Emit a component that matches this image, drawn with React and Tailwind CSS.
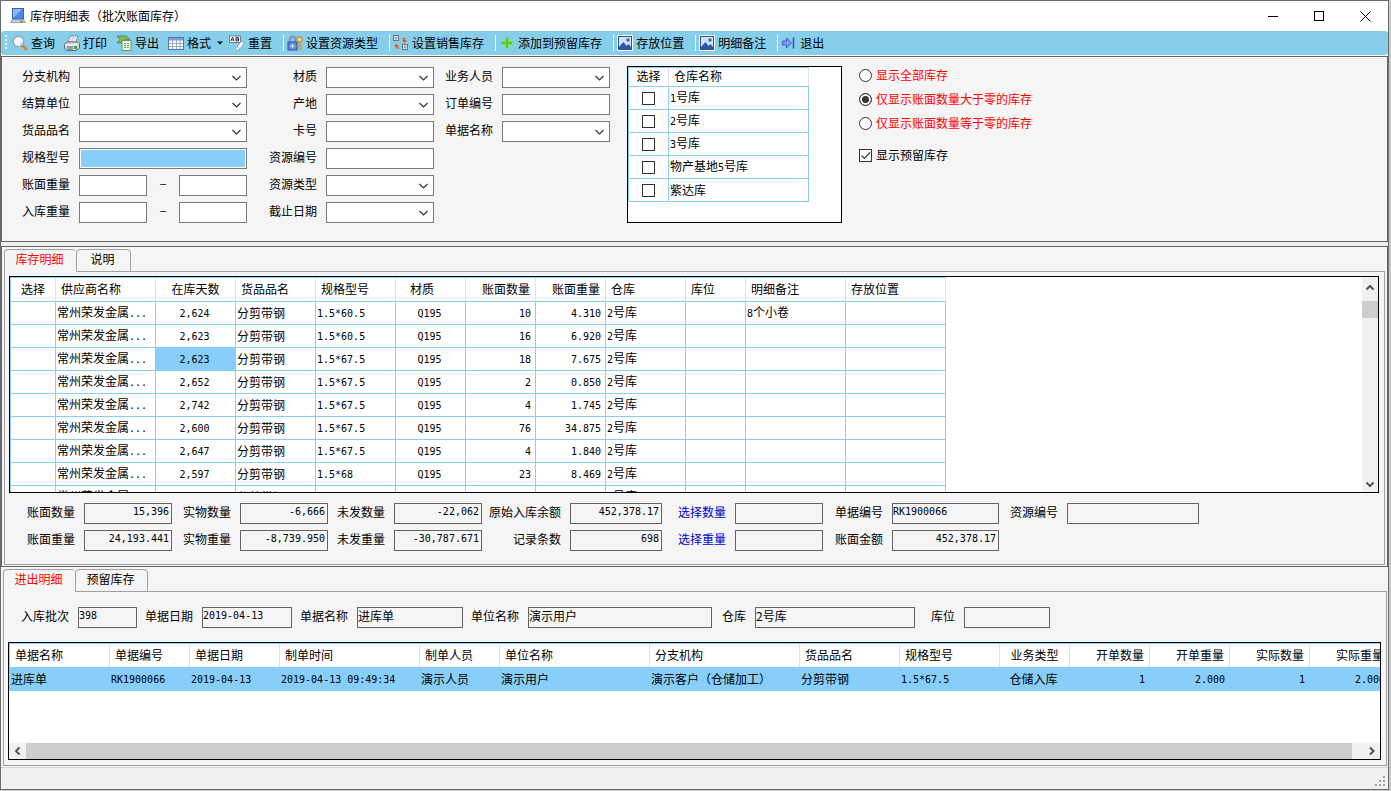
import React, { useState } from 'react'
import clsx from 'clsx'

const MONO = 'font-["DejaVu_Sans_Mono",monospace] text-[10px]'

/* ---------- icons ---------- */

const Icon = ({ children }) => (
  <svg viewBox="0 0 16 16" className="size-4 shrink-0" aria-hidden="true">{children}</svg>
)

const AppIcon = () => (
  <Icon>
    <rect x="2.500" y=".5" width="11" height="10.500" fill="#4f86e8" stroke="#3a62b4" />
    <path d="M3 1h9L3 10z" fill="#8fb8fa" />
    <path d="M2 12h12l1.500 2.500H.5z" fill="#d9dfe6" stroke="#7d8b9b" strokeWidth=".8" />
    <path d="M10 13.500h3" stroke="#3fa34a" />
  </Icon>
)

const SearchIcon = () => (
  <Icon>
    <path d="M10.500 10.500l3.500 3.500" stroke="#c98a2b" strokeWidth="3" strokeLinecap="round" />
    <circle cx="6.500" cy="6.500" r="5.300" fill="#f2f8ff" stroke="#97a3bb" strokeWidth="1.400" />
    <path d="M8 10a4 4 0 0 0 2-3" stroke="#b9d3f2" strokeWidth="1.500" fill="none" />
  </Icon>
)

const PrinterIcon = () => (
  <Icon>
    <path d="M6.500 1H14l-2.500 6H4z" fill="#fff" stroke="#77808c" strokeWidth=".8" />
    <path d="M7.500 3h4M6.500 5h4" stroke="#8aa0c8" strokeWidth=".8" />
    <path d="M3 7h10l2.500 1v5L12 15.500H2L.5 13V9.500z" fill="#d3d8df" stroke="#59616c" strokeWidth=".9" />
    <path d="M1 10h10.500L15 8" stroke="#fff" fill="none" />
    <path d="M3 12h6M3 14h6" stroke="#59616c" />
    <rect x="10" y="11" width="3" height="3" fill="#2fb344" />
  </Icon>
)

const ExportIcon = () => (
  <Icon>
    <path d="M1 1h9.500l3 3.500H9L7.500 8H1l3-3.500z" fill="#7cb85c" stroke="#4b8a3a" strokeWidth=".8" />
    <rect x="6" y="5.500" width="9" height="10" fill="#f2f7ec" stroke="#6b8f5c" strokeWidth=".9" />
    <path d="M8 8.500h5M8 10.500h5M8 12.500h5" stroke="#6a9a58" strokeDasharray="2 1" />
  </Icon>
)

const GridIcon = () => (
  <Icon>
    <rect x=".5" y="2.500" width="15" height="12" fill="#fff" stroke="#5575ad" />
    <rect x="1" y="3" width="14" height="2.500" fill="#7c9fd6" />
    <path d="M1 8.500h14M1 11.500h14M4.500 3v11M8.500 3v11M12 3v11" stroke="#7f97c0" strokeWidth=".8" />
  </Icon>
)

const ResetIcon = () => (
  <Icon>
    <rect x=".5" y="1" width="11" height="6.500" fill="#fff" stroke="#5b6780" strokeWidth=".8" />
    <path d="M1.800 6.200l1.700-4 1.700 4M2.500 5h2M7 2.500h2.500v3.500H7zM7 4.200h2.500" stroke="#222" strokeWidth=".9" fill="none" />
    <path d="M8 11.500L12.500 6l2.500 1.500-.5 2L10 15H7.500L6 13z" fill="#f4f6fa" stroke="#8c97a8" strokeWidth=".9" />
    <path d="M8 11.500l2.500 2" stroke="#8c97a8" strokeWidth=".8" />
  </Icon>
)

const LockIcon = () => (
  <Icon>
    <path d="M3 7V4a2.500 2.500 0 0 1 5 0v3" fill="none" stroke="#7088b8" strokeWidth="1.500" />
    <rect x="1" y="7" width="9" height="8" fill="#5b8be0" stroke="#2d55a8" />
    <path d="M5.500 8.500v5M3 11h5" stroke="#dce9ff" />
    <circle cx="12.500" cy="4.500" r="2.500" fill="#fbe19b" stroke="#c98f2a" strokeWidth="1.400" />
    <path d="M12.500 7v8M12.500 10.500h2M12.500 13.500h2" stroke="#d99a25" strokeWidth="1.800" />
  </Icon>
)

const SwapIcon = () => (
  <Icon>
    <g fill="#fff" stroke="#6b7488">
      <rect x=".5" y=".5" width="5" height="5" />
      <rect x="9.500" y="9.500" width="5" height="5" />
    </g>
    <path d="M3 1v4M1 3h4M12 10v4M10 12h4" stroke="#6b7488" strokeWidth=".8" />
    <path d="M9 3.500h2.500v3M9.800 5l1.700 2 1.700-2" stroke="#e2572b" strokeWidth="1.200" fill="none" />
    <path d="M6.500 13H3.500v-3M1.800 11.500l1.700-2 1.700 2" stroke="#e2572b" strokeWidth="1.200" fill="none" />
  </Icon>
)

const PlusIcon = () => (
  <Icon>
    <path d="M6.500 2.500h3v4h4v3h-4v4h-3v-4h-4v-3h4z" fill="#4fcf1c" stroke="#8fe070" strokeWidth=".8" />
  </Icon>
)

const ImageIcon = () => (
  <Icon>
    <rect width="16" height="16" fill="#fff" />
    <rect x="1.500" y="1.500" width="13" height="13" fill="#cfe2fa" stroke="#2f5597" />
    <path d="M2 12l4.500-5 3 4 2-2 2.500 3v2H2z" fill="#2f56a6" />
    <circle cx="11" cy="5" r="1.700" fill="#3a66b5" />
  </Icon>
)

const ExitIcon = () => (
  <Icon>
    <path d="M1.500 6h4V3l5 5-5 5v-3h-4z" fill="#7f9cf0" stroke="#3350c4" strokeWidth=".9" />
    <path d="M12.500 2.500v11" stroke="#3350c4" strokeWidth="1.600" />
  </Icon>
)

const Chevron = () => (
  <svg viewBox="0 0 9 6" className="pointer-events-none col-start-1 row-start-1 mr-[6px] h-[6px] w-[9px] self-center justify-self-end">
    <path d="M.5 1l4 4 4-4" fill="none" stroke="#333" strokeWidth="1.200" />
  </svg>
)

const ScrollArrow = ({ d }) => (
  <svg viewBox="0 0 16 16" className="size-4"><path d={d} fill="none" stroke="#555" strokeWidth="2" /></svg>
)

/* ---------- small pieces ---------- */

// latin runs are set in the narrow monospace face
const Mixed = ({ text }) =>
  text.split(/([\x20-\x7e]+)/).filter(Boolean).map((part, i) =>
    /^[\x20-\x7e]/.test(part) ? <span key={i} className={MONO}>{part}</span> : part
  )

const ToolButton = ({ icon, text, children }) => (
  <button type="button" className="flex h-6 shrink-0 items-center gap-[3px] pr-[9px]">
    {icon}
    <span>{text}</span>
    {children}
  </button>
)

const ToolSep = () => <span className="mr-[3px] ml-[2px] h-4 w-px shrink-0 bg-white" />

const FieldLabel = ({ id, children }) => (
  <label htmlFor={id} className="col-span-1 self-center pr-[9px] pb-[4px] text-right whitespace-nowrap">{children}</label>
)

const TextBox = ({ id, label, highlight }) => (
  <input
    id={id}
    aria-label={label}
    type="text"
    className={clsx(
      'h-[21px] w-full min-w-0 border border-[#7a7a7a] px-[2px] outline-none',
      highlight ? 'bg-[#87cefa] shadow-[inset_0_0_0_1px_#fff]' : 'bg-white'
    )}
  />
)

const SelectBox = ({ id }) => (
  <div className="grid">
    <select id={id} className="col-start-1 row-start-1 h-[21px] w-full appearance-none border border-[#7a7a7a] bg-white px-[2px] outline-none">
      <option></option>
    </select>
    <Chevron />
  </div>
)

const RangeBox = ({ id, label }) => (
  <div className="grid grid-cols-[68px_32px_68px] items-center">
    <TextBox id={id} />
    <span className={clsx('pb-[4px] text-center', MONO)}>–</span>
    <TextBox label={label + '上限'} />
  </div>
)

const ReadOnlyField = ({ id, label, value = '', right, blue }) => (
  <>
    <label htmlFor={id} className={clsx('self-center pr-[9px] pb-[4px] text-right whitespace-nowrap', blue && 'text-[#0000c8]')}>{label}</label>
    <input
      id={id}
      readOnly
      value={value}
      className={clsx(
        'h-[21px] w-full min-w-0 border border-[#646464] bg-[#f5f5f5] pr-[2px] pb-[4px] outline-none',
        right && 'text-right',
        /^[\x20-\x7e]+$/.test(value) && MONO
      )}
    />
  </>
)

const Tabs = ({ items, active, onChange }) => (
  <div className="flex h-[23px]" role="tablist">
    {items.map(([name, width], i) => (
      <button
        key={name}
        type="button"
        role="tab"
        aria-selected={i === active}
        onClick={() => onChange(i)}
        className={clsx(
          'rounded-t-[4px] border-t border-[#a0a0a0] pr-[2px]',
          width,
          i === 0 ? 'border-l' : 'border-x',
          i === active ? 'pb-[4px] text-[#ff0000]' : 'border-b pb-[3px]'
        )}
      >
        {name}
      </button>
    ))}
    <div className="flex-1 border-b border-[#a0a0a0]" />
  </div>
)

/* ---------- data ---------- */

const warehouses = ['1号库', '2号库', '3号库', '物产基地5号库', '紫达库']

const stockColumns = [
  { title: '选择', w: 'w-[45px]', align: 'center' },
  { title: '供应商名称', w: 'w-[100px]' },
  { title: '在库天数', w: 'w-[80px]', align: 'center' },
  { title: '货品品名', w: 'w-[80px]' },
  { title: '规格型号', w: 'w-[80px]' },
  { title: '材质', w: 'w-[70px]', align: 'center', sort: true },
  { title: '账面数量', w: 'w-[70px]', align: 'right' },
  { title: '账面重量', w: 'w-[70px]', align: 'right' },
  { title: '仓库', w: 'w-[80px]' },
  { title: '库位', w: 'w-[60px]' },
  { title: '明细备注', w: 'w-[100px]' },
  { title: '存放位置', w: 'w-[100px]' },
]

const stockRows = [
  ['2,624', '1.5*60.5', '10', '4.310', '8个小卷'],
  ['2,623', '1.5*60.5', '16', '6.920', ''],
  ['2,623', '1.5*67.5', '18', '7.675', ''],
  ['2,652', '1.5*67.5', '2', '0.850', ''],
  ['2,742', '1.5*67.5', '4', '1.745', ''],
  ['2,600', '1.5*67.5', '76', '34.875', ''],
  ['2,647', '1.5*67.5', '4', '1.840', ''],
  ['2,597', '1.5*68', '23', '8.469', ''],
  ['', '', '', '', ''],
].map(([days, spec, qty, weight, note]) =>
  ['', '常州荣发金属...', days, '分剪带钢', spec, days && 'Q195', qty, weight, '2号库', '', note, '']
)

const billColumns = [
  { title: '单据名称', w: 'w-[100px]', value: '进库单' },
  { title: '单据编号', w: 'w-[80px]', value: 'RK1900066' },
  { title: '单据日期', w: 'w-[90px]', value: '2019-04-13' },
  { title: '制单时间', w: 'w-[140px]', value: '2019-04-13 09:49:34' },
  { title: '制单人员', w: 'w-[80px]', value: '演示人员' },
  { title: '单位名称', w: 'w-[150px]', value: '演示用户' },
  { title: '分支机构', w: 'w-[150px]', value: '演示客户（仓储加工）' },
  { title: '货品品名', w: 'w-[100px]', value: '分剪带钢' },
  { title: '规格型号', w: 'w-[100px]', value: '1.5*67.5' },
  { title: '业务类型', w: 'w-[70px]', align: 'center', value: '仓储入库' },
  { title: '开单数量', w: 'w-[80px]', align: 'right', value: '1' },
  { title: '开单重量', w: 'w-[80px]', align: 'right', value: '2.000' },
  { title: '实际数量', w: 'w-[80px]', align: 'right', value: '1' },
  { title: '实际重量', w: 'w-[80px]', align: 'right', value: '2.000' },
]

const headAlign = (c) =>
  c.align === 'center' ? 'px-0 text-center' : c.align === 'right' ? 'pr-[5px] pl-0 text-right' : 'pr-0 pl-[5px] text-left'

const cellAlign = (c) =>
  c.align === 'center' ? 'pr-[2px] pl-0 text-center' : c.align === 'right' ? 'pr-[4px] pl-0 text-right' : 'pr-0 pl-px text-left'

/* ---------- sections ---------- */

const TitleBar = () => (
  <header className="flex h-[30px] items-center bg-white pl-[9px]">
    <AppIcon />
    <h1 className="ml-1 flex-1">库存明细表（批次账面库存）</h1>
    <div className="flex">
      <button type="button" aria-label="最小化" className="flex h-[30px] w-[46px] items-center justify-center">
        <svg viewBox="0 0 11 11" className="size-[11px]" shapeRendering="crispEdges"><path d="M0 5.500h10" stroke="#000" /></svg>
      </button>
      <button type="button" aria-label="最大化" className="flex h-[30px] w-[46px] items-center justify-center">
        <svg viewBox="0 0 11 11" className="size-[11px]" shapeRendering="crispEdges"><rect x=".5" y=".5" width="9" height="9" fill="none" stroke="#000" /></svg>
      </button>
      <button type="button" aria-label="关闭" className="flex h-[30px] w-[46px] items-center justify-center">
        <svg viewBox="0 0 11 11" className="size-[11px]"><path d="M.5.5l10 10M10.500.5l-10 10" stroke="#000" /></svg>
      </button>
    </div>
  </header>
)

const Toolbar = () => (
  <div className="bg-white pb-px">
    <div className="flex h-6 items-center rounded-[3px] bg-[#87ceeb] pl-[4px]">
      <svg viewBox="0 0 3 16" className="mr-[4px] h-4 w-[3px] shrink-0">
        <path d="M0 1h2M0 5h2M0 9h2M0 13h2" stroke="#f5fbff" strokeWidth="2" />
      </svg>
      <ToolButton icon={<SearchIcon />} text="查询" />
      <ToolButton icon={<PrinterIcon />} text="打印" />
      <ToolButton icon={<ExportIcon />} text="导出" />
      <ToolButton icon={<GridIcon />} text="格式">
        <svg viewBox="0 0 6 4" className="h-[4px] w-[6px] overflow-visible"><path d="M3 .5h6L6 3.500z" fill="#000" /></svg>
      </ToolButton>
      <ToolButton icon={<ResetIcon />} text="重置" />
      <ToolSep />
      <ToolButton icon={<LockIcon />} text="设置资源类型" />
      <ToolSep />
      <ToolButton icon={<SwapIcon />} text="设置销售库存" />
      <ToolSep />
      <ToolButton icon={<PlusIcon />} text="添加到预留库存" />
      <ToolSep />
      <ToolButton icon={<ImageIcon />} text="存放位置" />
      <ToolSep />
      <ToolButton icon={<ImageIcon />} text="明细备注" />
      <ToolSep />
      <ToolButton icon={<ExitIcon />} text="退出" />
    </div>
  </div>
)

const WarehouseList = () => (
  <div className="ml-[17px] h-[157px] w-[215px] border border-black bg-white">
    <table className="w-[181px] table-fixed border-separate border-spacing-0 border-t border-l border-[#87cefa]">
      <thead>
        <tr className="h-[19px]">
          <th className="w-[40px] border-r border-b border-r-[#e0e0e0] border-b-[#87cefa] p-0 pb-[2px] text-center font-normal">选择</th>
          <th className="w-[140px] border-r border-b border-r-[#e0e0e0] border-b-[#87cefa] p-0 pb-[2px] pl-[5px] text-left font-normal">仓库名称</th>
        </tr>
      </thead>
      <tbody>
        {warehouses.map((name) => (
          <tr key={name} className="h-[23px]">
            <td className="border-r border-b border-[#87cefa] p-0">
              <input type="checkbox" aria-label={name} className="mx-auto block size-[13px] appearance-none border border-[#333] bg-white checked:bg-[#333]" />
            </td>
            <td className="border-r border-b border-[#87cefa] p-0 pl-px"><Mixed text={name} /></td>
          </tr>
        ))}
      </tbody>
    </table>
  </div>
)

const DisplayOptions = () => {
  const [mode, setMode] = useState(1)
  const [reserved, setReserved] = useState(true)

  return (
    <div className="ml-[17px]">
      {['显示全部库存', '仅显示账面数量大于零的库存', '仅显示账面数量等于零的库存'].map((text, i) => (
        <label key={text} className="flex h-6 items-center gap-[4px] pb-[6px] text-[#ff0000]">
          <input
            type="radio"
            name="stock-mode"
            checked={mode === i}
            onChange={() => setMode(i)}
            className="size-[13px] appearance-none rounded-full border border-[#333] bg-white checked:bg-[#333] checked:shadow-[inset_0_0_0_2px_#fff]"
          />
          {text}
        </label>
      ))}
      <label className="mt-2 flex h-6 items-center gap-[4px] pb-[6px]">
        <span className="grid">
          <input
            type="checkbox"
            checked={reserved}
            onChange={() => setReserved(!reserved)}
            className="peer col-start-1 row-start-1 size-[13px] appearance-none border border-[#333] bg-white"
          />
          <svg viewBox="0 0 13 13" className="pointer-events-none invisible col-start-1 row-start-1 size-[13px] peer-checked:visible">
            <path d="M2.500 6.500l3 3 5.500-6" fill="none" stroke="#333" strokeWidth="1.200" />
          </svg>
        </span>
        显示预留库存
      </label>
    </div>
  )
}

const FilterPanel = () => (
  <section className="flex items-start border border-[#646464] bg-[#f5f5f5] pt-[9px] pb-[18px]">
    <div className="mt-px grid shrink-0 grid-cols-[77px_168px_79px_108px_68px_108px] gap-y-[6px]">
      <FieldLabel id="branch">分支机构</FieldLabel>
      <SelectBox id="branch" />
      <FieldLabel id="material">材质</FieldLabel>
      <SelectBox id="material" />
      <FieldLabel id="clerk">业务人员</FieldLabel>
      <SelectBox id="clerk" />

      <FieldLabel id="unit">结算单位</FieldLabel>
      <SelectBox id="unit" />
      <FieldLabel id="origin">产地</FieldLabel>
      <SelectBox id="origin" />
      <FieldLabel id="order">订单编号</FieldLabel>
      <TextBox id="order" />

      <FieldLabel id="goods">货品品名</FieldLabel>
      <SelectBox id="goods" />
      <FieldLabel id="card">卡号</FieldLabel>
      <TextBox id="card" />
      <FieldLabel id="bill">单据名称</FieldLabel>
      <SelectBox id="bill" />

      <FieldLabel id="spec">规格型号</FieldLabel>
      <TextBox id="spec" highlight />
      <FieldLabel id="resource">资源编号</FieldLabel>
      <TextBox id="resource" />
      <div className="col-span-2" />

      <FieldLabel id="book-weight">账面重量</FieldLabel>
      <RangeBox id="book-weight" label="账面重量" />
      <FieldLabel id="resource-type">资源类型</FieldLabel>
      <SelectBox id="resource-type" />
      <div className="col-span-2" />

      <FieldLabel id="in-weight">入库重量</FieldLabel>
      <RangeBox id="in-weight" label="入库重量" />
      <FieldLabel id="end-date">截止日期</FieldLabel>
      <SelectBox id="end-date" />
    </div>
    <WarehouseList />
    <DisplayOptions />
  </section>
)

const StockTable = () => (
  <div className="flex h-[217px] overflow-hidden border border-black bg-white">
    <div className="min-w-0 flex-1 overflow-hidden">
      <table className="w-[936px] table-fixed border-separate border-spacing-0 border-t border-l border-[#87cefa]">
        <thead>
          <tr className="h-[24px]">
            {stockColumns.map((c) => (
              <th
                key={c.title}
                className={clsx(
                  'border-r border-b border-r-[#e0e0e0] border-b-[#87cefa] pt-0 pb-[2px] font-normal',
                  c.w,
                  c.sort ? 'pr-[17px] text-center' : headAlign(c)
                )}
              >
                {c.title}
              </th>
            ))}
          </tr>
        </thead>
        <tbody>
          {stockRows.map((row, r) => (
            <tr key={r} className="h-[23px]">
              {row.map((text, i) => (
                <td
                  key={i}
                  className={clsx(
                    'overflow-hidden border-r border-b border-[#87cefa] py-0 leading-[14px] whitespace-nowrap',
                    cellAlign(stockColumns[i]),
                    r === 2 && i === 2 && 'bg-[#87cefa]'
                  )}
                >
                  <Mixed text={text} />
                </td>
              ))}
            </tr>
          ))}
        </tbody>
      </table>
    </div>
    <div className="flex w-4 flex-col bg-[#f0f0f0]">
      <button type="button" aria-label="向上滚动" className="h-[24px] w-4">
        <ScrollArrow d="M4.500 8.500L8 5l3.500 3.500" />
      </button>
      <div className="h-[17px] bg-[#cdcdcd]" />
      <div className="flex-1" />
      <button type="button" aria-label="向下滚动" className="h-4 w-4">
        <ScrollArrow d="M4.500 6.500L8 10l3.500-3.500" />
      </button>
    </div>
  </div>
)

const StockPanel = () => {
  const [tab, setTab] = useState(0)

  return (
    <section className="mt-[4px] border border-[#646464] bg-[#f5f5f5] px-[2px] pt-[2px] pb-px">
      <Tabs items={[['库存明细', 'w-[72px]'], ['说明', 'w-[55px]']]} active={tab} onChange={setTab} />
      <div className="border-x border-b border-[#a0a0a0] pt-[4px] pr-[5px] pb-[13px] pl-[4px]">
        <StockTable />
        <div className="mt-[10px] grid grid-cols-[75px_88px_68px_88px_66px_88px_88px_92px_73px_88px_69px_107px_68px_132px] gap-y-[6px]">
          <ReadOnlyField id="s-qty" label="账面数量" value="15,396" right />
          <ReadOnlyField id="s-real-qty" label="实物数量" value="-6,666" right />
          <ReadOnlyField id="s-unsent-qty" label="未发数量" value="-22,062" right />
          <ReadOnlyField id="s-origin" label="原始入库余额" value="452,378.17" right />
          <ReadOnlyField id="s-sel-qty" label="选择数量" blue />
          <ReadOnlyField id="s-bill" label="单据编号" value="RK1900066" />
          <ReadOnlyField id="s-resource" label="资源编号" />
          <ReadOnlyField id="s-weight" label="账面重量" value="24,193.441" right />
          <ReadOnlyField id="s-real-weight" label="实物重量" value="-8,739.950" right />
          <ReadOnlyField id="s-unsent-weight" label="未发重量" value="-30,787.671" right />
          <ReadOnlyField id="s-count" label="记录条数" value="698" right />
          <ReadOnlyField id="s-sel-weight" label="选择重量" blue />
          <ReadOnlyField id="s-amount" label="账面金额" value="452,378.17" right />
        </div>
      </div>
    </section>
  )
}

const BillTable = () => (
  <div className="mt-[14px] flex flex-1 flex-col overflow-hidden border border-black bg-white">
    <div className="flex-1 overflow-hidden">
      <table className="w-[1381px] table-fixed border-separate border-spacing-0 border-t border-l border-[#87cefa]">
        <thead>
          <tr className="h-[23px]">
            {billColumns.map((c) => (
              <th key={c.title} className={clsx('border-r border-[#e0e0e0] pt-0 pb-px font-normal whitespace-nowrap', c.w, headAlign(c))}>
                {c.title}
              </th>
            ))}
          </tr>
        </thead>
        <tbody>
          <tr className="h-[24px] bg-[#87cefa]">
            {billColumns.map((c) => (
              <td key={c.title} className={clsx('border-r border-[#87cefa] py-0 leading-[14px] whitespace-nowrap', cellAlign(c))}>
                <Mixed text={c.value} />
              </td>
            ))}
          </tr>
        </tbody>
      </table>
    </div>
    <div className="flex h-4 bg-[#f0f0f0]">
      <button type="button" aria-label="向左滚动" className="h-4 w-[17px]">
        <ScrollArrow d="M10.500 4.500L7 8l3.500 3.500" />
      </button>
      <div className="flex-1 bg-[#cdcdcd]" />
      <button type="button" aria-label="向右滚动" className="flex h-4 w-[28px] justify-end">
        <ScrollArrow d="M6 4.500L9.500 8 6 11.500" />
      </button>
    </div>
  </div>
)

const BillPanel = () => {
  const [tab, setTab] = useState(0)

  return (
    <section className="flex flex-1 flex-col bg-[#f5f5f5] pt-[2px] pr-px pb-px pl-[2px]">
      <Tabs items={[['进出明细', 'w-[72px]'], ['预留库存', 'w-[73px]']]} active={tab} onChange={setTab} />
      <div className="flex flex-1 flex-col border-x border-b border-[#a0a0a0] pt-[15px] pr-[5px] pb-[5px] pl-[4px]">
        <div className="grid grid-cols-[70px_59px_65px_90px_65px_106px_65px_184px_43px_160px_49px_86px]">
          <ReadOnlyField id="b-batch" label="入库批次" value="398" />
          <ReadOnlyField id="b-date" label="单据日期" value="2019-04-13" />
          <ReadOnlyField id="b-name" label="单据名称" value="进库单" />
          <ReadOnlyField id="b-unit" label="单位名称" value="演示用户" />
          <ReadOnlyField id="b-store" label="仓库" value="2号库" />
          <ReadOnlyField id="b-place" label="库位" />
        </div>
        <BillTable />
      </div>
    </section>
  )
}

const StatusBar = () => (
  <footer className="flex h-[22px] items-end justify-end border-t border-[#d7d7d7] bg-[#f0f0f0] pr-[2px] pb-[2px]">
    <svg viewBox="0 0 12 12" className="size-3" shapeRendering="crispEdges">
      <path d="M9 1h2v2H9zM5 5h2v2H5zM9 5h2v2H9zM1 9h2v2H1zM5 9h2v2H5zM9 9h2v2H9z" fill="#a0a0a0" />
    </svg>
  </footer>
)

const App = () => {
  return (
    <div className='flex min-h-screen bg-[#c8c8c8] pr-[2px] pb-px font-["Noto_Sans_CJK_SC",sans-serif] text-[12px] leading-[16px] text-black'>
      <div className="flex min-w-0 flex-1 flex-col overflow-hidden border border-[#6b6b6b] bg-[#f0f0f0]">
        <TitleBar />
        <Toolbar />
        <FilterPanel />
        <StockPanel />
        <BillPanel />
        <StatusBar />
      </div>
    </div>
  )
}

export default App
